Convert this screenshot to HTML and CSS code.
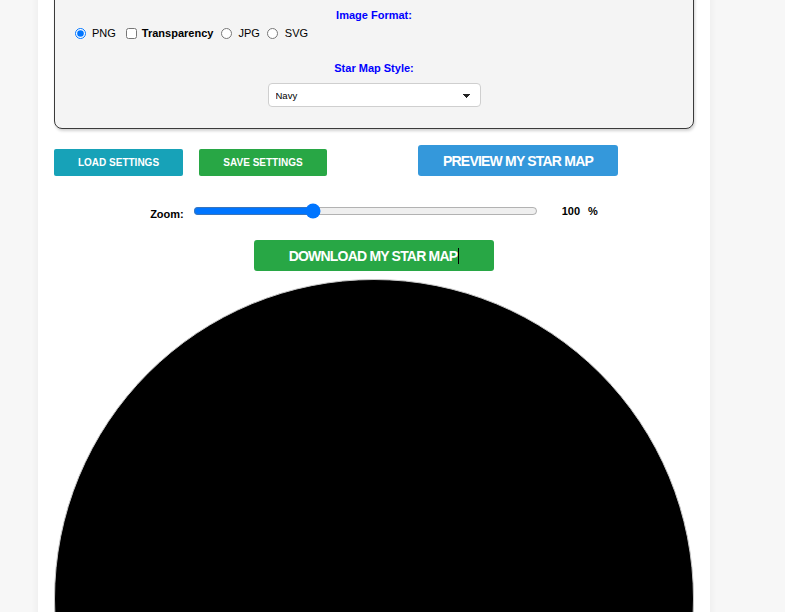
FILE: index.html
```html
<!DOCTYPE html>
<html>
<head>
<meta charset="utf-8">
<link rel="stylesheet" href="styles.css">
</head>
<body>
<div class="container">
  <div class="panel">
    <div class="field-label">Image Format:</div>
    <div class="format-row"><input class="ctl r1" type="radio" name="fmt" checked><label class="opt">PNG</label><input class="ctl cb" type="checkbox"><label class="opt bold">Transparency</label><input class="ctl r2" type="radio" name="fmt"><label class="opt">JPG</label><input class="ctl r3" type="radio" name="fmt"><label class="opt">SVG</label></div>
    <div class="field-label style-label">Star Map Style:</div>
    <div class="select-wrap">
      <select class="style-select">
        <option>Navy</option>
      </select>
    </div>
  </div>

  <div class="button-row">
    <button class="btn small load">LOAD SETTINGS</button>
    <button class="btn small save">SAVE SETTINGS</button>
    <button class="btn big preview">PREVIEW MY STAR MAP</button>
  </div>

  <div class="zoom-row">
    <span class="zoom-label">Zoom:</span>
    <input class="zoom-range" type="range" min="0" max="100" value="34">
    <span class="zoom-value">100</span>
    <span class="zoom-pct">%</span>
  </div>

  <div class="download-row">
    <button class="btn big download">DOWNLOAD MY STAR MAP<span class="caret"></span></button>
  </div>

  <div class="map-wrap">
    <div class="map"></div>
  </div>
</div>
</body>
</html>
```

FILE: styles.css
```css
html, body {
  margin: 0;
  padding: 0;
}
body {
  background: #f7f7f7;
  font-family: "Liberation Sans", Arial, sans-serif;
  height: 612px;
  overflow: hidden;
}
.container {
  width: 640px;
  margin-left: 38px;
  padding: 0 16px;
  background: #fff;
  box-shadow: 0 0 8px rgba(0, 0, 0, 0.06);
  min-height: 1000px;
}
.panel {
  margin-top: -20px;
  padding: 28px 15px 21px 15px;
  background: #f4f4f4;
  border: 1px solid #3a3a3a;
  border-radius: 0 0 8px 8px;
  box-shadow: 1px 2px 3px rgba(0, 0, 0, 0.18);
}
.field-label {
  color: #0000ff;
  font-weight: bold;
  font-size: 11px;
  line-height: 13px;
  text-align: center;
}
.format-row {
  display: flex;
  align-items: center;
  height: 14px;
  margin-top: 4px;
  font-size: 11px;
  line-height: 14px;
  color: #000;
}
.ctl {
  width: 11px;
  height: 11px;
  margin: 0;
  flex: none;
}
.r1 {
  margin: 0 6px 0 5px;
}
.cb {
  margin: 0 5px 0 10px;
}
.r2 {
  margin: 0 6px 0 8px;
}
.r3 {
  margin: 0 7px 0 7px;
}
.opt.bold {
  font-weight: bold;
}
.style-label {
  margin-top: 22px;
}
.select-wrap {
  display: flex;
  justify-content: center;
  margin-top: 8px;
}
.style-select {
  appearance: none;
  -webkit-appearance: none;
  width: 213px;
  height: 24px;
  border: 1px solid #cfcfcf;
  border-radius: 4px;
  background-color: #fff;
  background-image: linear-gradient(45deg, transparent 50%, #222 50%), linear-gradient(135deg, #222 50%, transparent 50%);
  background-position: calc(100% - 13px) 10px, calc(100% - 9px) 10px;
  background-size: 4px 4px, 4px 4px;
  background-repeat: no-repeat;
  font-family: "Liberation Sans", Arial, sans-serif;
  font-size: 9.5px;
  color: #000;
  padding: 0 7px;
}
.button-row {
  display: flex;
  align-items: flex-end;
  margin-top: 16px;
}
.btn {
  border: none;
  color: #fff;
  font-family: "Liberation Sans", Arial, sans-serif;
  font-weight: bold;
  padding: 0;
  cursor: pointer;
}
.btn.small {
  height: 27px;
  font-size: 10px;
  border-radius: 2px;
}
.btn.big {
  height: 31px;
  font-size: 14px;
  letter-spacing: -0.8px;
  border-radius: 3px;
}
.load {
  width: 129px;
  background: #17a2b8;
}
.save {
  width: 128px;
  margin-left: 16px;
  background: #28a745;
}
.preview {
  width: 200px;
  margin-left: 91px;
  background: #3498db;
}
.zoom-row {
  display: flex;
  align-items: center;
  justify-content: center;
  margin-top: 26px;
  height: 18px;
  font-size: 11px;
  font-weight: bold;
  color: #000;
}
.zoom-label {
  margin-top: 5px;
}
.zoom-range {
  width: 345px;
  margin: 0 0 0 9px;
}
.zoom-value {
  margin-left: 24px;
}
.zoom-pct {
  margin-left: 8px;
}
.download-row {
  display: flex;
  justify-content: center;
  margin-top: 20px;
}
.download {
  width: 240px;
  background: #28a745;
  display: flex;
  align-items: center;
  justify-content: center;
}
.caret {
  display: inline-block;
  width: 1px;
  height: 16px;
  background: #000;
  margin-left: 1px;
}
.map-wrap {
  margin-top: 8px;
}
.map {
  width: 638px;
  height: 638px;
  border: 1px solid #c8c8c8;
  border-radius: 50%;
  background: #000;
}
```
